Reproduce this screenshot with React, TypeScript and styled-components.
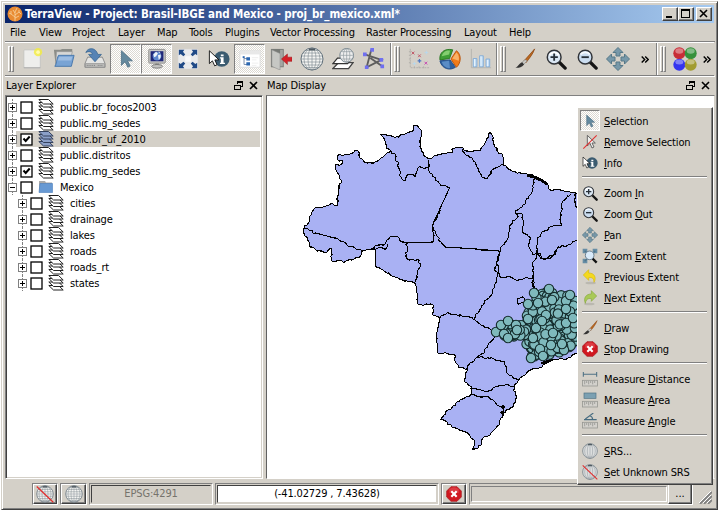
import React from "react";
import styled, { createGlobalStyle, css } from "styled-components";

const GlobalStyle = createGlobalStyle`
  * { box-sizing: border-box; }
  html, body { margin: 0; padding: 0; background: #fff; overflow: hidden; }
  body { font: 11px "DejaVu Sans Condensed", "DejaVu Sans", sans-serif; font-stretch: condensed; color: #000; }
  svg { display: block; flex: none; }
`;

const face = "#d4d0c8";
const raised = css`
  border: 1px solid;
  border-color: #fff #404040 #404040 #fff;
  box-shadow: inset -1px -1px #808080;
`;
const checker = css`
  background: repeating-conic-gradient(#fff 0 25%, #dcd9d2 0 50%) 0 0 / 2px 2px;
`;

const Window = styled.div`
  width: 717px;
  height: 509px;
  margin: 1px;
  padding: 3px 2px 0 3px;
  background: ${face};
  border: 1px solid;
  border-color: ${face} #404040 #404040 ${face};
  box-shadow: inset 1px 1px #fff, inset -1px -1px #808080;
  display: flex;
  flex-direction: column;
  position: relative;
`;
const TitleBar = styled.div`
  height: 18px;
  width: 709px;
  flex: none;
  display: flex;
  align-items: center;
  padding: 0 2px;
  background: linear-gradient(90deg, #0a246a, #a6caf0);
`;
const TitleText = styled.span`
  flex: 1;
  padding-left: 2px;
  color: #fff;
  font-weight: bold;
  font-size: 11.5px;
  letter-spacing: -0.11px;
  white-space: pre;
`;
const WinButton = styled.div<{ $gap?: boolean }>`
  ${raised}
  width: 16px;
  height: 14px;
  background: ${face};
  margin-left: ${(p) => (p.$gap ? 2 : 0)}px;
`;
const MenuBar = styled.div`
  height: 19px;
  flex: none;
  display: grid;
  grid-template-columns: 29px 33px 46px 39px 32px 36px 45px 96px 98px 45px 40px;
  padding-left: 5px;
  line-height: 20px;
  border-bottom: 1px solid #808080;
`;
const Label = styled.span`
  white-space: pre;
  letter-spacing: -0.15px;
  u { text-underline-offset: 1px; text-decoration-thickness: 1px; text-decoration-skip-ink: none; }
`;
const ToolRow = styled.div`
  height: 34px;
  width: 709px;
  flex: none;
  display: flex;
  border-top: 1px solid #fff;
  border-bottom: 1px solid #808080;
`;
const ToolGroup = styled.div<{ $w: number }>`
  width: ${(p) => p.$w}px;
  display: flex;
  align-items: center;
  padding-left: 2px;
  border-left: 1px solid #fff;
  border-right: 1px solid #808080;
  &:first-child { border-left: 0; padding-left: 3px; }
  &:last-child { border-right: 0; }
`;
const Handle = styled.div`
  width: 6px;
  height: 26px;
  margin-right: 3px;
  flex: none;
  display: flex;
  &::before, &::after {
    content: "";
    width: 3px;
    border: 1px solid;
    border-color: #fff #808080 #808080 #fff;
  }
`;
const ToolButton = styled.div<{ $on?: boolean }>`
  width: 31px;
  height: 30px;
  flex: none;
  display: flex;
  align-items: center;
  justify-content: center;
  ${(p) => p.$on && css`
    ${checker}
    border: 1px solid;
    border-color: #808080 #fff #fff #808080;
  `}
`;
const More = styled.div`
  flex: 1;
  display: flex;
  justify-content: center;
`;
const Docks = styled.div`
  display: flex;
  height: 403px;
  width: 710px;
  flex: none;
  border-top: 1px solid #fff;
`;
const Dock = styled.div<{ $w: number }>`
  width: ${(p) => p.$w}px;
  display: flex;
  flex-direction: column;
  margin-right: 3px;
  &:last-child { margin-right: 0; }
`;
const DockTitle = styled.div`
  height: 18px;
  flex: none;
  display: flex;
  align-items: center;
  justify-content: space-between;
  padding: 0 5px 1px 1px;
`;
const Sunken = styled.div`
  flex: 1;
  min-height: 0;
  overflow: hidden;
  background: #fff;
  border: 1px solid;
  border-color: #808080 #fff #fff #808080;
  box-shadow: inset 1px 1px #404040, inset -1px -1px ${face};
  padding: 3px 2px 2px 1px;
`;
const MapFrame = styled(Sunken)`
  padding: 0;
  border-color: #808080 ${face} #fff #606060;
  box-shadow: none;
`;
const Row = styled.div<{ $depth: number; $sel?: boolean }>`
  height: 16px;
  display: flex;
  align-items: center;
  padding-left: ${(p) => p.$depth * 10}px;
  position: relative;
  ${(p) => p.$sel && css`background: linear-gradient(90deg, #fff 9px, ${face} 9px);`}
  &::before {
    content: "";
    position: absolute;
    top: 0;
    bottom: 0;
    left: ${(p) => 5 + p.$depth * 10}px;
    border-left: 1px dotted #808080;
  }
`;
const Expander = styled.svg`
  margin-left: 1px;
  position: relative;
`;
const Check = styled.svg`
  margin: 0 5px 0 3px;
`;
const StatusBar = styled.div`
  height: 28px;
  display: flex;
  align-items: center;
  padding: 2px 0 1px 27px;
`;
const StatusItem = styled.div<{ $w: number }>`
  width: ${(p) => p.$w}px;
  height: 22px;
  flex: none;
  margin-right: 2px;
  display: flex;
  border: 1px solid;
  border-color: #808080 #fff #fff #808080;
`;
const PushButton = styled.div<{ $w?: number }>`
  ${raised}
  width: ${(p) => (p.$w ? p.$w + "px" : "100%")};
  display: flex;
  align-items: center;
  justify-content: center;
  background: ${face};
`;
const Field = styled.div<{ $off?: boolean }>`
  flex: 1;
  margin: 1px;
  display: flex;
  align-items: center;
  justify-content: center;
  background: ${(p) => (p.$off ? face : "#fff")};
  color: ${(p) => (p.$off ? "#76736c" : "#000")};
  border: 1px solid;
  border-color: #404040 ${face} ${face} #404040;
  box-shadow: 0 0 0 1px ${face};
`;
const Progress = styled.div`
  flex: 1;
  margin: 2px 1px 2px 1px;
  border: 1px solid;
  border-color: #808080 #fff #fff #808080;
`;
const Grip = styled.div`
  margin: 8px 0 0 4px;
`;
const Popup = styled.div`
  ${raised}
  position: absolute;
  left: 575px;
  top: 105px;
  width: 136px;
  height: 378px;
  padding: 2px;
  background: ${face};
`;
const PopItem = styled.div`
  height: 21px;
  display: flex;
  align-items: center;
  ${Label} { padding-top: 1px; }
`;
const PopIcon = styled.div<{ $on?: boolean }>`
  width: 20px;
  height: 21px;
  margin-right: 4px;
  display: flex;
  align-items: center;
  justify-content: center;
  ${(p) => p.$on && css`
    ${checker}
    border: 1px solid;
    border-color: #808080 #fff #fff #808080;
  `}
`;
const PopRule = styled.div`
  height: 2px;
  margin: 3px 3px 4px 2px;
  border-top: 1px solid #808080;
  border-bottom: 1px solid #fff;
`;

/* ---------- icons ---------- */

const icons: Record<string, React.ReactNode> = {
  fresh: (
    <>
      <rect x="2" y="2" width="18" height="20" rx="1" fill="#eeeeec" stroke="#c4c4c0" />
      <path d="M2 21.500h18" stroke="#aaa" />
      <circle cx="17.500" cy="4.500" r="4.500" fill="#f4ee3c" opacity=".8" />
      <circle cx="17.500" cy="4.500" r="2" fill="#fffbb0" />
    </>
  ),
  open: (
    <>
      <path d="M1 2h7l2-1h11v5H5L3 20z" fill="#8b8d88" />
      <path d="M4 4h17l-3 12H3z" fill="#d8d8d6" stroke="#999" strokeWidth=".6" />
      <path d="M6 8h17l-3 12H2c2-2 2-9 4-12z" fill="#78a3d4" stroke="#4474ab" />
      <path d="M7 9.500h14l-1 4H5z" fill="#9dbde2" />
    </>
  ),
  save: (
    <>
      <path d="M4 10h16l3 7v4H1v-4z" fill="#e4e4e2" stroke="#888" />
      <path d="M1.500 17h21v4h-21z" fill="#bcbcba" stroke="#888" strokeWidth=".7" />
      <path d="M3 19h9M15 19h6" stroke="#777" strokeDasharray="1 1" />
      <path d="M2 5C4-1 13-1 15 7h4l-7 8-7-8h4C9 4 5 3 2 5z" fill="#5683b5" stroke="#32618f" strokeWidth=".8" />
    </>
  ),
  arrow: <path d="M7 3v16l4-4 3 6 2.500-1.300L13.800 14H19z" fill="#64899e" stroke="#496a7f" strokeWidth=".8" />,
  monitor: (
    <>
      <rect x="3" y="1.500" width="18" height="15" rx="1" fill="#c9c9c7" stroke="#8b8b89" />
      <rect x="5" y="3.500" width="14" height="11" fill="#202879" />
      <circle cx="12" cy="8.800" r="4.800" fill="#5d87ce" />
      <path d="M8 7l3-3 2 2-2 3-2 1zM13 8l3-1v3l-2 3zM13 4h2l1 2z" fill="#eff4f8" />
      <path d="M10 17h4v2h-4z" fill="#777" />
      <ellipse cx="12" cy="20" rx="6" ry="2" fill="#c4c4c2" stroke="#777" />
    </>
  ),
  extent: (
    <>
      <rect x="1.500" y="1.500" width="21" height="21" rx="1" fill="#e9eaec" stroke="#e4e4e4" />
      <path d="M2 2h6L6.500 4 9 7 7 9 4 6.500 2 8zM22 2h-6l1.500 2L15 7l2 2 3-2.500L22 8zM2 22h6l-1.500-2L9 17l-2-2-3 2.500L2 16zM22 22h-6l1.500-2-2.500-3 2-2 3 2.500 2-1.500z" fill="#204a87" />
      <path d="M9 9h6v6H9z" fill="#f8f8f8" />
    </>
  ),
  info: (
    <>
      <circle cx="15" cy="12" r="8.500" fill="#3b5b70" />
      <path d="M14 7h3v2h-3zM13 10h4v6h1.500v1.500H13V16h1v-4.500h-1z" fill="#fff" />
      <path d="M1.500 3v14l3.300-3 2.500 5.500 2.500-1.200L7.500 13H12z" fill="#fff" stroke="#111" />
    </>
  ),
  tree: (
    <>
      <path d="M1 3h22v18H1z" fill="#fff" stroke="#ddd" />
      <path d="M1 3h22v4H1z" fill="#e8e8e8" />
      <path d="M5.500 9v9h4M5.500 11.500h4" stroke="#7488a8" fill="none" />
      <path d="M4 9h2v2H4zM8 10h4v3.500H8zM8 15.500h4V19H8z" fill="#2b67b1" />
      <path d="M14 10.500h7M14 13h5M14 16.500h7M14 19h5" stroke="#eee" />
    </>
  ),
  exit: (
    <>
      <path d="M1 1h14v20H1z" fill="#777a76" />
      <path d="M2 2l9 4v18l-9-4z" fill="#c6c7c4" stroke="#888" strokeWidth=".6" />
      <path d="M11 2h3v18h-3z" fill="#a4a6a2" />
      <path d="M12.500 12L19 6.500V10h5v4.500h-5V18z" fill="#d42229" stroke="#9e1c20" strokeWidth=".6" />
    </>
  ),
  globe: (
    <>
      <circle cx="12" cy="12" r="11" fill="#f5f5f3" stroke="#5f6e79" />
      <path d="M12 1v22M1 12h22M3 6h18M3 18h18M2 9h20M2 15h20M5.500 3.500h13M6 20.500h12" stroke="#818b91" strokeWidth=".65" />
      <ellipse cx="12" cy="12" rx="4" ry="11" fill="none" stroke="#818b91" strokeWidth=".65" />
      <ellipse cx="12" cy="12" rx="8" ry="11" fill="none" stroke="#818b91" strokeWidth=".65" />
      <path d="M9 1.500h6v1.800H9z" fill="#505b62" />
    </>
  ),
  layersGlobe: (
    <>
      <path d="M7 16h16l-5 6.500H1z" fill="#fff" stroke="#444" strokeWidth="1.500" />
      <path d="M6 11h16l-5 6H1z" fill="#fff" stroke="#333" strokeWidth="1.300" />
      <circle cx="16" cy="8" r="7.500" fill="#eee" stroke="#72818b" />
      <path d="M16 .5v15M8.500 8h15M10 4h12M10 12h12" stroke="#8d979d" strokeWidth=".7" />
      <ellipse cx="16" cy="8" rx="3.500" ry="7.500" fill="none" stroke="#8d979d" strokeWidth=".7" />
    </>
  ),
  poly: (
    <>
      <path d="M2 7l18 6L4 21 9 2M8 11l13 9" stroke="#5d5d5d" strokeWidth="2" fill="none" />
      <path d="M8 0h4v4H8zM0 5h4v4H0zM2 19h4v4H2zM18 11h4v4h-4zM19 18h4v4h-4z" fill="#6f6ff0" />
    </>
  ),
  scatter: (
    <>
      <path d="M2.500 1v20.500H23M1 4h2M1 8h2M1 12h2M1 16h2M7 20v3M12 20v3M17 20v3" stroke="#b0aeaa" strokeDasharray="2 1" fill="none" />
      <path d="M4 4l3 3m0-3L4 7M11 7l3 3m0-3l-3 3" stroke="#bf5264" />
      <path d="M10.500 14h4m-2-2v4" stroke="#4975c5" strokeWidth="1.300" />
      <path d="M18 15l3 3m0-3l-3 3" stroke="#c643b0" />
      <path d="M18 5h4m-2-2v4M5 17h4m-2-2v4" stroke="#b8d8ec" />
    </>
  ),
  pie: (
    <>
      <path d="M11.500 11.500L1 13C0 5 6 0 15 2z" fill="#3e9e36" stroke="#26751f" />
      <path d="M3 9c1-5 6-7 9-6l-1 4z" fill="#83ce70" />
      <path d="M1 14l11-1 6 8c-6 4-15 2-17-7z" fill="#2d609f" stroke="#204a87" />
      <path d="M3 15l8-1 1 8c-5 0-8-3-9-7z" fill="#5a8cc6" />
      <path d="M13 12l6-9c6 4 5 14 0 18z" fill="#f07b1a" stroke="#b95208" />
      <path d="M14.500 11.500L19 5c3 3 3 6 2.500 9z" fill="#f8b268" />
    </>
  ),
  bars: (
    <>
      <path d="M1.500 1v20.500H23" stroke="#b4b2ae" fill="none" />
      <path d="M3.500 11.500h4v9h-4zM10.500 8.500h4v12h-4zM17.500 12h4v8.500h-4z" fill="#c1dcf5" stroke="#81abd5" />
      <path d="M5 12v8M12 9v11M19 13v7" stroke="#ecf6fd" />
    </>
  ),
  brush: (
    <>
      <path d="M22.500 1L11 14l2 2C17 11 21 6 22.500 1z" fill="#bd6b21" stroke="#89420f" strokeWidth=".8" />
      <path d="M12 12.500L8.500 16l2 2 4-4z" fill="#c8c8c4" stroke="#777" strokeWidth=".6" />
      <path d="M9 15.500l2 2.500c-3 4-7 3.500-9.500 3.500C5 20 5 17 9 15.500z" fill="#333" />
    </>
  ),
  zoomIn: (
    <>
      <path d="M15 15l7 7" stroke="#151515" strokeWidth="3.500" strokeLinecap="round" />
      <circle cx="10" cy="10" r="7.500" fill="#dae7f4" stroke="#303338" strokeWidth="1.600" />
      <path d="M5 8c2-4 8-4 10 0" stroke="#fff" strokeWidth="2" fill="none" />
      <path d="M6 10h8M10 6v8" stroke="#273039" strokeWidth="2" />
    </>
  ),
  zoomOut: (
    <>
      <path d="M15 15l7 7" stroke="#151515" strokeWidth="3.500" strokeLinecap="round" />
      <circle cx="10" cy="10" r="7.500" fill="#cbddf0" stroke="#303338" strokeWidth="1.600" />
      <path d="M5 7c2-3 8-3 10 0" stroke="#f5f9fd" strokeWidth="2" fill="none" />
      <path d="M6 10h8" stroke="#273039" strokeWidth="2" />
    </>
  ),
  pan: (
    <path d="M12 .5l5 5h-3V9h-4V5.500H7zM12 23.500l5-5h-3V15h-4v3.500H7zM.5 12l5-5v3H9v4H5.500v3zM23.500 12l-5-5v3H15v4h3.500v3z" fill="#7798a9" stroke="#567888" />
  ),
  balls: (
    <>
      <circle cx="6.300" cy="6.300" r="6" fill="#c82e37" /><circle cx="17.700" cy="6.300" r="6" fill="#36913b" />
      <circle cx="6.300" cy="17.700" r="6" fill="#3434ef" /><circle cx="17.700" cy="17.700" r="6" fill="#a29c30" />
      <g fill="#fff" opacity=".38">
        <ellipse cx="6.300" cy="4" rx="4" ry="2.800" /><ellipse cx="17.700" cy="4" rx="4" ry="2.800" />
        <ellipse cx="6.300" cy="15" rx="4" ry="2.500" /><ellipse cx="17.700" cy="15" rx="4" ry="2.500" />
      </g>
    </>
  ),
  noSelect: (
    <>
      <path d="M8 2v16l4-4 3 7 3-1.500-3-6h5z" fill="#efefed" stroke="#555" strokeWidth="1.300" />
      <path d="M2 22L22 2" stroke="#e23030" strokeWidth="1.600" />
    </>
  ),
  zoomFull: (
    <>
      <path d="M1 1h7v7H1zM16 1h7v7h-7zM1 16h7v7H1z" fill="#668da5" />
      <path d="M4 4l5 5M20 4l-5 5M4 20l5-5" stroke="#4c748b" strokeWidth="2" />
      <path d="M15 15l7 7" stroke="#111" strokeWidth="3.500" />
      <circle cx="11.500" cy="11" r="6.500" fill="#d8eafa" stroke="#6c8090" strokeWidth="1.500" />
    </>
  ),
  prev: (
    <>
      <ellipse cx="13" cy="21" rx="8" ry="2" fill="#bbb8b0" />
      <path d="M2 9l8-8v5c9 0 12 7 8 14 0-6-3-8-8-7v4z" fill="#f4d91e" stroke="#d7b80c" />
    </>
  ),
  next: (
    <>
      <ellipse cx="11" cy="21" rx="8" ry="2" fill="#bbb8b0" />
      <path d="M22 9l-8-8v5C5 6 2 13 5 20c1-6 4-8 9-7v4z" fill="#a9c956" stroke="#87a83c" />
    </>
  ),
  stop: (
    <>
      <path d="M7.500 1h9L23 7.500v9L16.500 23h-9L1 16.500v-9z" fill="#d01820" stroke="#a3141b" />
      <path d="M5 5c4-4 10-4 14 0v6C14 8 10 8 5 11z" fill="#e6535a" opacity=".6" />
      <path d="M8 8l8 8m0-8l-8 8" stroke="#fff" strokeWidth="3.200" />
    </>
  ),
  distance: <path d="M2 5h20M2 1.500v7M22 1.500v7" stroke="#4f7285" strokeWidth="1.600" />,
  area: <rect x="3" y="1.500" width="18" height="8" fill="#7ba0b2" stroke="#4f7285" />,
  angle: <path d="M3 10h19M5 9L17 0M12 4c3 1 4 4 4 6" fill="none" stroke="#486c80" strokeWidth="1.700" />,
};

const Ruler = () => (
  <>
    <rect x=".7" y="14" width="22.600" height="8.500" fill="#d3d1cc" stroke="#969692" strokeWidth="1.200" />
    <path d="M4 15v5M7 15v3M10 15v5M13 15v3M16 15v5M19 15v3" stroke="#898985" />
  </>
);

const Icon = ({ name, size = 22 }: { name: string; size?: number }) => (
  <svg width={size} height={size} viewBox="0 0 24 24">
    {name === "noGlobe" ? (
      <>{icons.globe}<path d="M1 2l22 21" stroke="#e32b2b" strokeWidth="1.600" /></>
    ) : icons[name]}
    {["distance", "area", "angle"].includes(name) && <Ruler />}
  </svg>
);

const Chevrons = () => (
  <svg width="8" height="7" viewBox="0 0 8 7">
    <path d="M.7.5l3 3-3 3M4.200.5l3 3-3 3" fill="none" stroke="#000" strokeWidth="1.400" />
  </svg>
);

const DockControls = () => (
  <svg width="24" height="9" viewBox="0 0 24 9" shapeRendering="crispEdges">
    <path d="M3.500 3V1H8.500V5.500H7M3 .5h6M.5 4h5.500v4.500H.5zM0 4h6.500" fill="none" stroke="#000" />
    <path d="M16 1l7 7m0-7l-7 7" stroke="#000" strokeWidth="1.600" shapeRendering="auto" />
  </svg>
);

const LayerIcon = ({ sel }: { sel?: boolean }) => (
  <svg width="16" height="16" viewBox="0 0 16 16">
    {[10.5, 7, 3.5, 0.5].map((y) => (
      <path key={y} d={`M.8 ${y}h9.700l4.700 4.500H5.500z`} fill={sel ? "#8b9fc8" : "#fff"} stroke={sel ? "#34415d" : "#222"} strokeWidth="1" />
    ))}
  </svg>
);

const FolderIcon = () => (
  <svg width="16" height="16" viewBox="0 0 16 16">
    <path d="M1 2h6l1 1.500h6V13H1z" fill="#aaa" />
    <path d="M2 4.500h12.500v9H1z" fill="#6799d3" stroke="#4b7fbd" strokeWidth=".6" />
  </svg>
);

/* ---------- map ---------- */

const outline =
  "304,228 307,225 310,220 309,217 312,212 314,209 320,207 326,206 332,203 337,206 338,195 339,187 341,180 339,175 336,170 336,164 340,165 343,163 342,160 338,160 338,155 350,154 354,152 358,151 360,158 367,163 375,162 383,157 387,153 391,151 386,148 386,142 384,138 380,134 387,135 395,138 405,134 413,131 413,126 417,125 419,128 422,135 420,140 420,147 424,156 429,159 434,156 440,155 443,153 452,153 452,149 463,148 466,151 480,151 484,145 490,132 492,135 495,147 497,151 502,154 503,160 503,165 513,172 527,174 540,179 547,183 550,190 555,189 564,191 582,194 582,351 577,353 570,358 553,360 543,365 542,367 532,369 523,376 518,381 514,386 516,398 513,407 503,413 499,425 491,433 483,438 481,445 478,448 473,450 474,443 475,441 470,436 463,431 452,427 447,422 440,420 444,415 453,406 463,399 470,396 472,387 465,382 467,369 459,368 456,363 455,355 451,354 438,353 436,337 440,318 433,315 433,305 418,304 417,293 415,283 409,282 398,278 392,276 381,269 376,267 375,249 373,249 362,251 360,257 352,260 345,262 331,260 331,248 327,252 317,251 314,248 310,247 309,242 304,233";

const borders = [
  "304,228 316,233 334,238 347,245 362,251 373,249 375,246 385,244 391,236 397,236 402,242 407,243 433,242 434,235 432,226 440,210",
  "391,151 395,154 398,164 400,171 399,175 405,181 408,174 413,174 415,177 418,168 429,167 429,160",
  "429,167 430,173 440,184 449,188 450,187 432,226 436,234 441,242 445,247 476,249 499,251",
  "463,149 465,154 472,158 478,168 482,177 487,179 491,171 503,164",
  "535,179 531,194 523,205 515,211 518,217 509,226 509,237 502,246 498,258 495,268 498,276",
  "515,212 522,214 523,226 522,231 528,236 531,238 528,245 533,255 537,253 537,240 542,232 556,225 562,225 560,217 563,201 571,194",
  "577,240 570,245 558,247 553,255 545,259 538,253 534,261 532,263 534,274 532,282 534,289",
  "576,193 575,203 578,209",
  "407,243 406,257 409,260 419,260 420,267 417,272 416,282",
  "375,249 381,247 386,249 388,244",
  "481,250 499,251 500,254 497,264 499,276 505,278 509,276 519,280 525,278 534,278",
  "498,276 495,284 492,294 486,300 481,308 476,314 475,320 481,325 490,329 498,332",
  "440,318 447,313 457,315 467,316 472,317 475,320",
  "498,333 488,345 484,353 477,357 470,363 467,369",
  "477,357 494,359 505,361 507,373 512,376 518,380",
  "472,388 481,390 491,391 495,387 505,385 514,386",
  "472,395 480,397 487,396 493,400 497,405 504,408 503,413",
  "534,278 535,288 543,294 547,289",
  "518,298 524,298 524,303 517,303 518,298",
  "537,250 541,259 549,259 555,254 556,250",
];

/* Roughens a polyline so that boundaries read as surveyed coasts and rivers. */
const roughen = (pts: string, seed: number) => {
  const p = pts.split(" ").map((s) => s.split(",").map(Number));
  let s = seed;
  const rnd = () => ((s = (s * 16807) % 2147483647) / 2147483647) - 0.5;
  const out: string[] = [];
  p.forEach(([x, y], i) => {
    out.push(`${x},${y}`);
    const n = p[i + 1];
    if (!n) return;
    const len = Math.hypot(n[0] - x, n[1] - y);
    const k = len > 18 ? 0 : Math.floor(len / 2);
    for (let j = 1; j < k; j++) {
      const t = j / k;
      out.push(`${(x + (n[0] - x) * t + rnd() * 2.2).toFixed(1)},${(y + (n[1] - y) * t + rnd() * 2.2).toFixed(1)}`);
    }
  });
  return out.join(" ");
};

const cities = (() => {
  const zone = [[534, 299], [546, 291], [565, 294], [578, 300], [578, 338], [566, 351], [548, 355], [532, 357], [526, 343], [526, 318]];
  const inside = (x: number, y: number) => {
    let hit = false;
    for (let i = 0, j = zone.length - 1; i < zone.length; j = i++) {
      const [a, b] = zone[i], [c, d] = zone[j];
      if (b > y !== d > y && x < ((c - a) * (y - b)) / (d - b) + a) hit = !hit;
    }
    return hit;
  };
  let s = 4291;
  const rnd = () => (s = (s * 16807) % 2147483647) / 2147483647;
  const out: number[][] = [];
  while (out.length < 300) {
    const x = 524 + rnd() * 56, y = 288 + rnd() * 72;
    if (inside(x, y)) out.push([x, y]);
  }
  for (let i = 0; i < 34; i++) out.push([502 + rnd() * 25, 323 + rnd() * 14]);
  return out.concat([
    [496, 332], [501, 325], [504, 334], [508, 321], [516, 325], [515, 334], [508, 338], [517, 330], [528, 304], [534, 293], [549, 289], [538, 303],
    [552, 300], [546, 315], [528, 319], [536, 328], [566, 301], [566, 309], [566, 323], [553, 333], [533, 338], [540, 349], [551, 345], [531, 358],
    [543, 356], [564, 350], [573, 318], [562, 344], [542, 321], [570, 295],
  ]);
})();

const MapView = () => (
  <svg width="311" height="384" viewBox="267 96 311 384">
    <g shapeRendering="crispEdges" stroke="#000" strokeWidth="1.100" strokeLinejoin="round">
      <polygon points={roughen(outline + " 304,228", 71)} fill="#a9b1f3" />
      {borders.map((b, i) => <polyline key={i} points={roughen(b, 31 + i * 97)} fill="none" />)}
      <polyline points="527,175 534,177 541,180 547,184" fill="none" strokeWidth="3" />
      <path d="M543 363h4l4-2 3-2-5 1-8 3zM502 406h2v2h-2zM501 412h3v1h-3z" />
    </g>
    <g fill="#7fb9bc" stroke="#142b2b" strokeWidth="1.100">
      {cities.map(([x, y], i) => <circle key={i} cx={x} cy={y} r="4.700" />)}
    </g>
  </svg>
);

/* ---------- data ---------- */

const menus = [
  "File", "View", "Project", "Layer", "Map", "Tools", "Plugins",
  "Vector Processing", "Raster Processing", "Layout", "Help",
];

const layers = [
  { t: "public.br_focos2003" },
  { t: "public.mg_sedes" },
  { t: "public.br_uf_2010", on: true, sel: true },
  { t: "public.distritos" },
  { t: "public.mg_sedes", on: true },
  { t: "Mexico", folder: true },
  ...["cities", "drainage", "lakes", "roads", "roads_rt", "states"].map((t) => ({ t, d: 1 })),
] as { t: string; d?: number; on?: boolean; sel?: boolean; folder?: boolean }[];

const popup: ([string, string, string, string] | null)[] = [
  ["arrow", "", "S", "election"], ["noSelect", "", "R", "emove Selection"], ["info", "", "I", "nfo"], null,
  ["zoomIn", "Zoom ", "I", "n"], ["zoomOut", "Zoom ", "O", "ut"], ["pan", "", "P", "an"], ["zoomFull", "Zoom ", "E", "xtent"],
  ["prev", "", "P", "revious Extent"], ["next", "", "N", "ext Extent"], null,
  ["brush", "", "D", "raw"], ["stop", "", "S", "top Drawing"], null,
  ["distance", "Measure ", "D", "istance"], ["area", "Measure ", "A", "rea"], ["angle", "Measure ", "A", "ngle"], null,
  ["globe", "", "S", "RS..."], ["noGlobe", "", "S", "et Unknown SRS"],
];

const mainTools = ["fresh", "open", "save", "arrow", "monitor", "extent", "info", "tree", "exit", "globe", "layersGlobe", "poly"];
const pressed = ["arrow", "monitor", "tree"];

export default function App() {
  return (
    <>
      <GlobalStyle />
      <Window>
        <TitleBar>
          <svg width="16" height="16" viewBox="0 0 16 16">
            <circle cx="8" cy="8" r="7.500" fill="#e98b32" />
            <path d="M8 15V6M8 11L4 8V5M8 9l4-3V4M4 8L2 7M12 6l2 2M8 7L6 4M8 6l2-4M8 12l4-2" stroke="#f8d6a5" strokeWidth=".8" fill="none" />
          </svg>
          <TitleText>TerraView - Project: Brasil-IBGE and Mexico - proj_br_mexico.xml*</TitleText>
          <WinButton><svg width="14" height="12"><path d="M3 9h6" stroke="#000" strokeWidth="2" /></svg></WinButton>
          <WinButton><svg width="14" height="12" shapeRendering="crispEdges"><path d="M2.500 1.500h8v8h-8zM2 2h9" stroke="#000" fill="none" /></svg></WinButton>
          <WinButton $gap><svg width="14" height="12"><path d="M3 2l7 7m0-7L3 9" stroke="#000" strokeWidth="1.600" /></svg></WinButton>
        </TitleBar>
        <MenuBar>
          {menus.map((m) => <Label key={m}>{m}</Label>)}
        </MenuBar>
        <ToolRow>
          <ToolGroup $w={386}>
            <Handle />
            {mainTools.map((n) => <ToolButton key={n} $on={pressed.includes(n)}><Icon name={n} size={n === "globe" ? 24 : 22} /></ToolButton>)}
          </ToolGroup>
          <ToolGroup $w={106}>
            <Handle />
            {["scatter", "pie", "bars"].map((n) => <ToolButton key={n}><Icon name={n} /></ToolButton>)}
          </ToolGroup>
          <ToolGroup $w={160}>
            <Handle />
            {["brush", "zoomIn", "zoomOut", "pan"].map((n) => <ToolButton key={n}><Icon name={n} size={n === "pan" ? 24 : 22} /></ToolButton>)}
            <More><Chevrons /></More>
          </ToolGroup>
          <ToolGroup $w={57}>
            <Handle />
            <ToolButton><Icon name="balls" size={24} /></ToolButton>
            <More><Chevrons /></More>
          </ToolGroup>
        </ToolRow>
        <Docks>
          <Dock $w={258}>
            <DockTitle><Label>Layer Explorer</Label><DockControls /></DockTitle>
            <Sunken>
              {layers.map((l, i) => (
                <Row key={i} $depth={l.d ?? 0} $sel={l.sel}>
                  <Expander width="9" height="9" shapeRendering="crispEdges">
                    <rect x=".5" y=".5" width="8" height="8" fill="#fff" stroke="#808080" />
                    <path d={l.folder ? "M2 4.500h5" : "M2 4.500h5M4.500 2v5"} stroke="#000" />
                  </Expander>
                  <Check width="13" height="13">
                    <rect x="1" y="1" width="11" height="11" fill="#fff" stroke="#000" strokeWidth="1.300" />
                    {l.on && <path d="M3.500 5.500l2.200 2.500 4-4.500" fill="none" stroke="#000" strokeWidth="2" />}
                  </Check>
                  {l.folder ? <FolderIcon /> : <LayerIcon sel={l.sel} />}
                  <Label>{"  " + l.t}</Label>
                </Row>
              ))}
            </Sunken>
          </Dock>
          <Dock $w={449}>
            <DockTitle><Label>Map Display</Label><DockControls /></DockTitle>
            <MapFrame><MapView /></MapFrame>
          </Dock>
        </Docks>
        <StatusBar>
          <StatusItem $w={26}><PushButton><Icon name="noGlobe" size={18} /></PushButton></StatusItem>
          <StatusItem $w={27}><PushButton><Icon name="globe" size={18} /></PushButton></StatusItem>
          <StatusItem $w={124}><Field $off><Label>EPSG:4291</Label></Field></StatusItem>
          <StatusItem $w={224}><Field><Label>(-41.02729 , 7.43628)</Label></Field></StatusItem>
          <StatusItem $w={26}><PushButton><Icon name="stop" size={16} /></PushButton></StatusItem>
          <StatusItem $w={224}><Progress /><PushButton $w={24}>...</PushButton></StatusItem>
          <Grip>
            <svg width="13" height="13">
              <path d="M1 13L13 1M5 13l8-8M9 13l4-4" stroke="#808080" strokeWidth="1.800" />
              <path d="M0 12L12 0M4 12l8-8M8 12l4-4" stroke="#fff" />
            </svg>
          </Grip>
        </StatusBar>
        <Popup>
          {popup.map((p, i) => p ? (
            <PopItem key={i}>
              <PopIcon $on={i === 0}><Icon name={p[0]} size={16} /></PopIcon>
              <Label>{p[1]}<u>{p[2]}</u>{p[3]}</Label>
            </PopItem>
          ) : <PopRule key={i} />)}
        </Popup>
      </Window>
    </>
  );
}
